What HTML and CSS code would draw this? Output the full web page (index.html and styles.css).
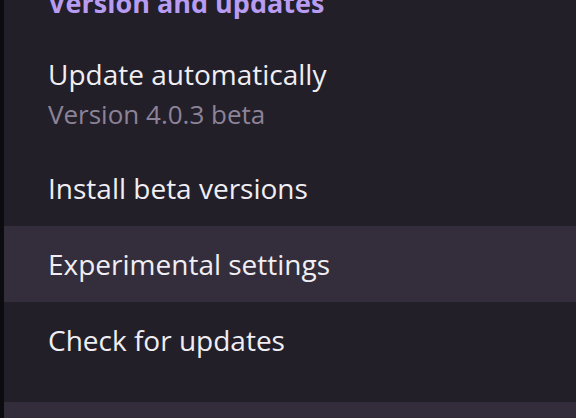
FILE: index.html
```html
<!DOCTYPE html>
<html>
<head>
<meta charset="utf-8">
<link rel="stylesheet" href="styles.css">
</head>
<body>
<div class="screen">
  <div class="edge"></div>
  <div class="panel">
    <div class="heading">Version and updates</div>
    <div class="row row-two">
      <div class="title">Update automatically</div>
      <div class="sub">Version 4.0.3 beta</div>
    </div>
    <div class="row"><div class="title">Install beta versions</div></div>
    <div class="row active"><div class="title">Experimental settings</div></div>
    <div class="row"><div class="title">Check for updates</div></div>
    <div class="spacer"></div>
    <div class="footer"></div>
  </div>
</div>
</body>
</html>
```
FILE: styles.css
```css
html, body { margin: 0; padding: 0; }
body { background: #0c0b0f; font-family: "Open Sans", "Noto Sans", sans-serif; }
.screen { display: flex; width: 576px; height: 418px; overflow: hidden; }
.edge { width: 4px; background: #0c0b10; flex: none; }
.panel { flex: 1; background: #221f29; display: flex; flex-direction: column; }
.heading { color: #b79cf2; font-weight: 700; font-size: 27px; line-height: 30px; margin-top: -12px; padding-left: 44px; height: 30px; flex: none; }
.row { padding-left: 44px; height: 76px; display: flex; flex-direction: column; justify-content: center; flex: none; box-sizing: border-box; }
.row-two { height: 132px; justify-content: flex-start; padding-top: 36px; }
.title { color: #f0eef3; font-size: 28px; line-height: 40px; }
.sub { color: #8d8398; font-size: 26px; line-height: 30px; margin-top: 5px; }
.active { background: #332d3c; }
.spacer { height: 24px; flex: none; }
.footer { flex: 1; background: #322c3b; }
```
